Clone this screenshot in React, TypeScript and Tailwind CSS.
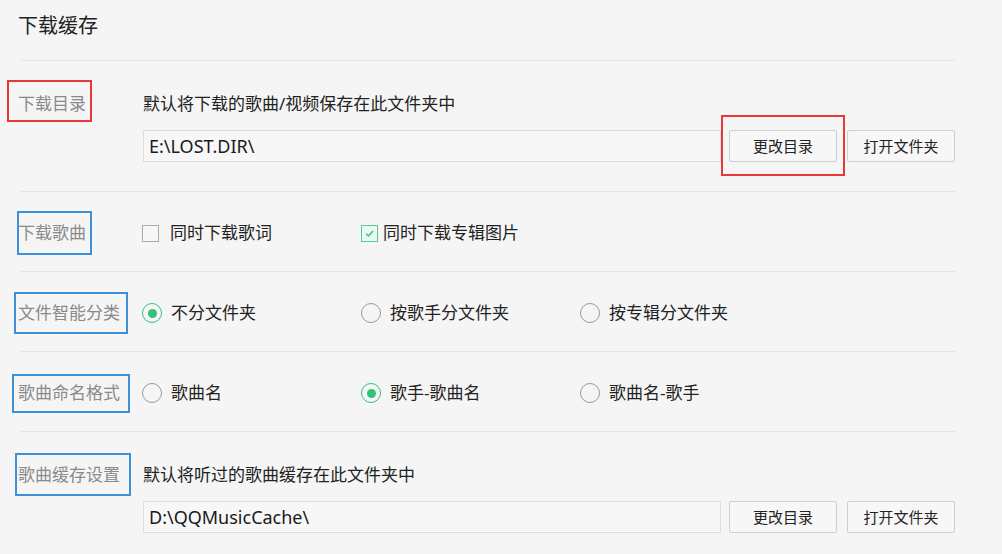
import React from "react";

const FONT = { fontFamily: '"Noto Sans", "Noto Sans CJK SC", sans-serif' };

function Checkbox({ checked, label }: { checked: boolean; label: string }) {
  return (
    <div className="flex items-center w-[219px]">
      {checked ? (
        <span className="w-[17px] h-[17px] border border-[#53c99a] bg-[#eaf8f1] flex items-center justify-center">
          <svg width="11" height="11" viewBox="0 0 11 11">
            <path d="M2 5.8 L4.4 8 L9 3" fill="none" stroke="#31c27c" strokeWidth="1.4" />
          </svg>
        </span>
      ) : (
        <span className="w-[17px] h-[17px] border border-[#aaaaaa] bg-[#f7f7f7]" />
      )}
      <span className={checked ? "ml-[5px] text-[17px] text-[#222]" : "ml-[11px] text-[17px] text-[#222]"}>{label}</span>
    </div>
  );
}

function Radio({ checked, label }: { checked: boolean; label: string }) {
  return (
    <div className="flex items-center w-[219px]">
      {checked ? (
        <span className="w-[20px] h-[20px] rounded-full border-[1.5px] border-[#31c27c] flex items-center justify-center">
          <span className="w-[9px] h-[9px] rounded-full bg-[#31c27c]" />
        </span>
      ) : (
        <span className="w-[20px] h-[20px] rounded-full border-[1.5px] border-[#9a9a9a]" />
      )}
      <span className="ml-[9px] text-[17px] text-[#222]">{label}</span>
    </div>
  );
}

function Button({ children, boxed }: { children: React.ReactNode; boxed?: boolean }) {
  return (
    <div className="relative">
      <button className="w-[108px] h-[32px] border border-[#cfcfcf] rounded-[2px] bg-[#f7f7f7] text-[15px] text-[#222] flex items-center justify-center">
        {children}
      </button>
      {boxed && (
        <span className="absolute left-[-8px] top-[-15px] w-[124px] h-[61px] border-2 border-[#e5393b] pointer-events-none" />
      )}
    </div>
  );
}

function PathRow({ path, boxed }: { path: string; boxed?: boolean }) {
  return (
    <div className="flex items-center mt-[14px]">
      <div className="w-[578px] h-[32px] border border-[#dddddd] bg-[#f7f7f7] flex items-center pl-[5px] text-[18px] text-[#1a1a1a]">
        {path}
      </div>
      <div className="ml-[8px] flex gap-[10px]">
        <Button boxed={boxed}>更改目录</Button>
        <Button>打开文件夹</Button>
      </div>
    </div>
  );
}

function Label({
  text,
  box,
}: {
  text: string;
  box: { l: string; t: string; w: string; h: string; color: string };
}) {
  return (
    <div className="relative w-[124px] ml-[-2px] shrink-0 text-[17px] leading-[24px] text-[#8a8a8a]">
      {text}
      <span className={`absolute border-2 pointer-events-none ${box.l} ${box.t} ${box.w} ${box.h} ${box.color}`} />
    </div>
  );
}

export default function App() {
  return (
    <div className="w-[1002px] h-[554px] bg-[#f5f5f5] overflow-hidden" style={FONT}>
      <div className="pl-[18px] pt-[12px] h-[60px] text-[20px] leading-[28px] text-[#222]">下载缓存</div>
      <div className="ml-[20px] w-[936px]">
        {/* 下载目录 */}
        <div className="border-t border-[#e6e6e6] pt-[31px] h-[131px]">
          <div className="flex">
            <Label
              text="下载目录"
              box={{ l: "left-[-11px]", t: "top-[-12px]", w: "w-[85px]", h: "h-[42px]", color: "border-[#e5393b]" }}
            />
            <div className="ml-[1px] text-[17px] leading-[24px] text-[#222]">默认将下载的歌曲/视频保存在此文件夹中</div>
          </div>
          <div className="pl-[123px]">
            <PathRow path="E:\LOST.DIR\" boxed />
          </div>
        </div>
        {/* 下载歌曲 */}
        <div className="border-t border-[#e6e6e6] h-[80px] pt-[3px] flex items-center">
          <Label
            text="下载歌曲"
            box={{ l: "left-[-1px]", t: "top-[-10px]", w: "w-[75px]", h: "h-[44px]", color: "border-[#3d8fd8]" }}
          />
          <Checkbox checked={false} label="同时下载歌词" />
          <Checkbox checked label="同时下载专辑图片" />
        </div>
        {/* 文件智能分类 */}
        <div className="border-t border-[#e6e6e6] h-[80px] pt-[3px] flex items-center">
          <Label
            text="文件智能分类"
            box={{ l: "left-[-4px]", t: "top-[-9px]", w: "w-[114px]", h: "h-[42px]", color: "border-[#3d8fd8]" }}
          />
          <Radio checked label="不分文件夹" />
          <Radio checked={false} label="按歌手分文件夹" />
          <Radio checked={false} label="按专辑分文件夹" />
        </div>
        {/* 歌曲命名格式 */}
        <div className="border-t border-[#e6e6e6] h-[80px] pt-[3px] flex items-center">
          <Label
            text="歌曲命名格式"
            box={{ l: "left-[-6px]", t: "top-[-7px]", w: "w-[118px]", h: "h-[39px]", color: "border-[#3d8fd8]" }}
          />
          <Radio checked={false} label="歌曲名" />
          <Radio checked label="歌手-歌曲名" />
          <Radio checked={false} label="歌曲名-歌手" />
        </div>
        {/* 歌曲缓存设置 */}
        <div className="border-t border-[#e6e6e6] pt-[31px]">
          <div className="flex">
            <Label
              text="歌曲缓存设置"
              box={{ l: "left-[-3px]", t: "top-[-10px]", w: "w-[116px]", h: "h-[43px]", color: "border-[#3d8fd8]" }}
            />
            <div className="ml-[1px] text-[17px] leading-[24px] text-[#222]">默认将听过的歌曲缓存在此文件夹中</div>
          </div>
          <div className="pl-[123px]">
            <PathRow path="D:\QQMusicCache\" />
          </div>
        </div>
      </div>
    </div>
  );
}
